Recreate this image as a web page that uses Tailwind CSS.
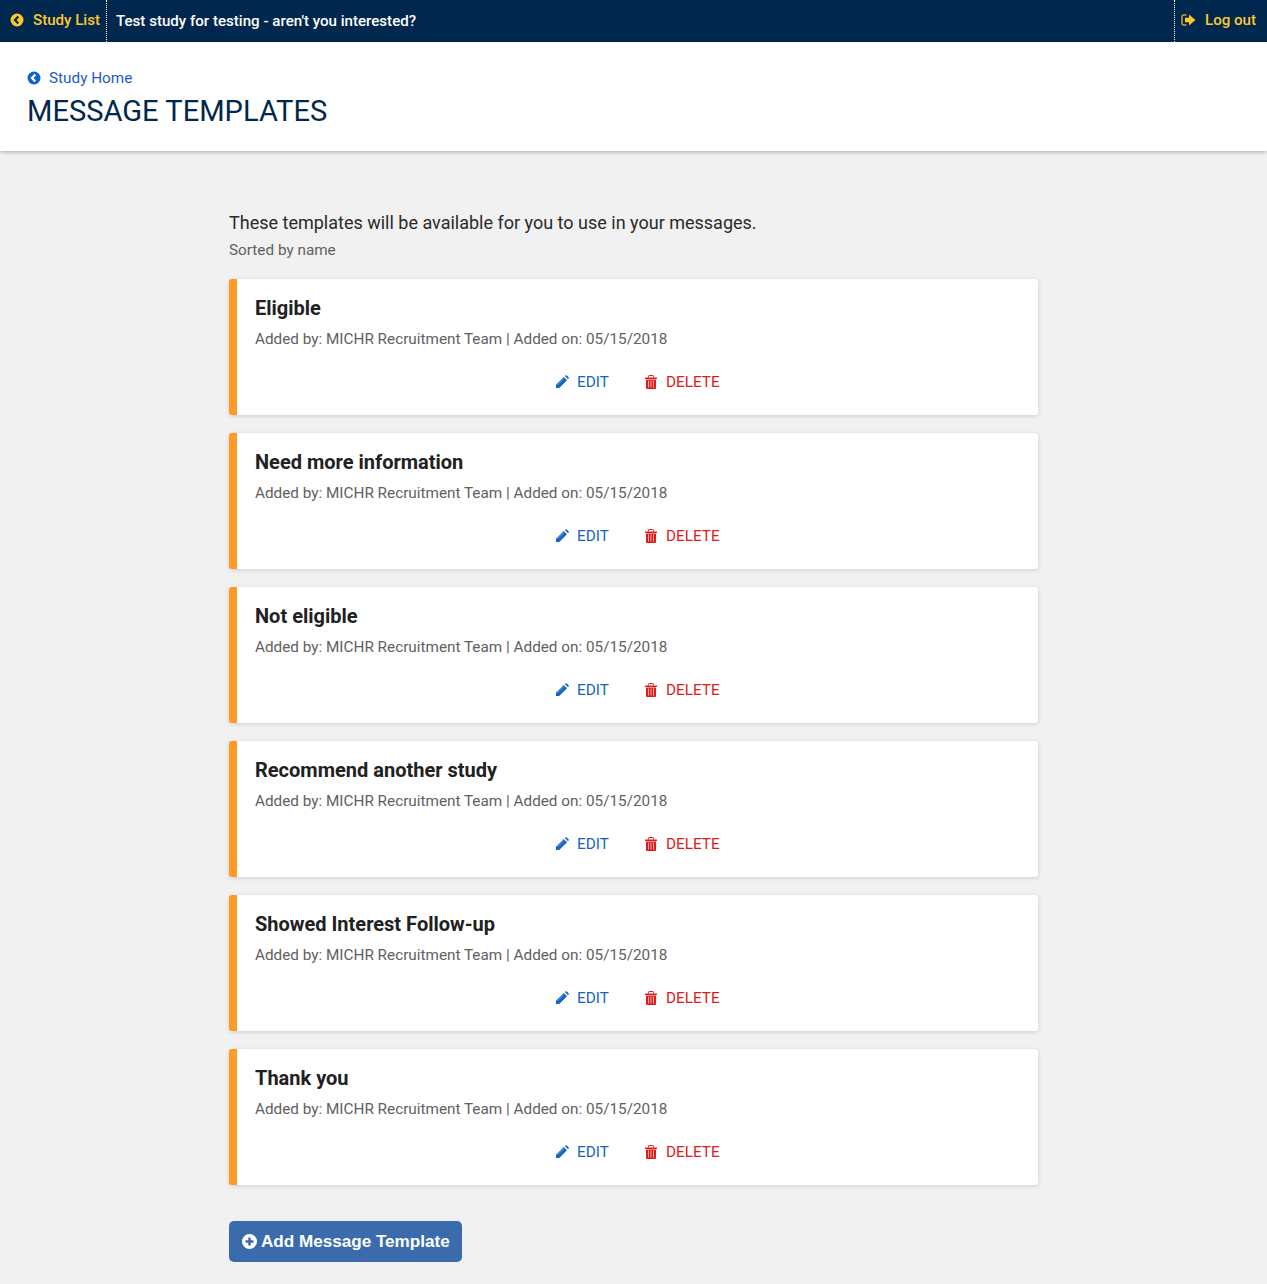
<!DOCTYPE html>
<html><head><meta charset="utf-8"><title>Message Templates</title>
<script src="https://cdn.jsdelivr.net/npm/@tailwindcss/browser@4"></script></head>
<body class="bg-[#f1f1f1] font-['Roboto',sans-serif] min-h-[1284px] overflow-hidden">
<nav class="h-[42px] bg-[#00274d] flex items-center text-[15.1px] font-medium">
  <a class="h-full flex items-center pl-[10px] pr-[6px] pb-[2px] border-r border-dotted border-white text-[#ffc72c] gap-[9px]">
    <svg class="w-[14px] h-[14px]" viewBox="0 0 14 14"><circle cx="7" cy="7" r="6.5" fill="#ffc72c"/><path d="M8.3 3.600 5 7l3.300 3.400" fill="none" stroke="#00274d" stroke-width="2.200"/></svg>
    <span>Study List</span></a>
  <span class="pl-[9px] text-white flex-1">Test study for testing - aren't you interested?</span>
  <a class="h-full flex items-center pl-[6px] pr-[11px] pb-[2px] border-l border-dotted border-white text-[#ffc72c] gap-[9px]">
    <svg class="w-[15px] h-[12px]" viewBox="0 0 15 12"><path d="M5.500 1H2.500A1.500 1.500 0 0 0 1 2.500v7A1.500 1.500 0 0 0 2.500 11h3" fill="none" stroke="#c9a02c" stroke-width="1.600"/><path d="M8 0.500 14.500 6 8 11.500V8.300H4V3.700h4z" fill="#ffc72c"/></svg>
    <span>Log out</span></a>
</nav>
<header class="h-[109px] bg-white shadow-[0_1px_4px_rgba(0,0,0,0.3)] pl-[27px] pt-[26px] relative">
  <a class="flex items-center gap-[8px] text-[#1d5cc9] text-[15.3px] leading-[20px]">
    <svg class="w-[14px] h-[14px]" viewBox="0 0 14 14"><circle cx="7" cy="7" r="6.500" fill="#0f62c9"/><path d="M8.300 3.600 5 7l3.300 3.400" fill="none" stroke="#fff" stroke-width="2.200"/></svg>
    <span>Study Home</span></a>
  <h1 class="text-[#00274d] text-[29.1px] leading-[36px] mt-[5px]">MESSAGE TEMPLATES</h1>
</header>
<main class="w-[809px] ml-[229px] pt-[60px]">
  <p class="text-[18px] leading-[24px] text-[#2a2a2a]">These templates will be available for you to use in your messages.</p>
  <p class="text-[15.3px] leading-[20px] mt-[5px] text-[#616161]">Sorted by name</p>
  <ul class="mt-[19px] flex flex-col gap-[18px]">
    <li class="h-[136px] bg-white border-l-[8px] border-[#ff9a27] rounded-[3px] shadow-[0_1px_4px_rgba(0,0,0,0.15)] pl-[18px] pt-[16px]">
      <h2 class="text-[20px] leading-[26px] font-bold text-[#212121]">Eligible</h2>
      <p class="text-[15.31px] leading-[20px] mt-[8px] text-[#616161]">Added by: MICHR Recruitment Team | Added on: 05/15/2018</p>
      <div class="flex text-[15.3px] leading-[20px] mt-[23px] ml-[300px]">
        <a class="flex items-center gap-[8px] text-[#1565c0] w-[90px]"><svg class="w-[14px] h-[14px]" viewBox="0 0 14 14"><path d="M1 9.800 8.800 2l3.200 3.200L4.200 13H1zM9.800 1l.6-.5a1 1 0 0 1 1.400 0l1.700 1.700a1 1 0 0 1 0 1.400l-.5.600z" fill="#1565c0"/><path d="M2.500 9.800 9 3.300" stroke="#7fb0e6" stroke-width=".8"/></svg><span>EDIT</span></a>
        <a class="flex items-center gap-[9px] text-[#e01b1b]"><svg class="w-[12px] h-[14px]" viewBox="0 0 12 14"><path d="M3.500 2.500V1.200A.7.7 0 0 1 4.200.5h3.600a.7.7 0 0 1 .7.7v1.300" fill="none" stroke="#e01b1b" stroke-width="1"/><path d="M0 2.500h12v1.500H0zM1 4.500h10V13a1 1 0 0 1-1 1H2a1 1 0 0 1-1-1z" fill="#e01b1b"/><path d="M3.500 5.500v7M6 5.500v7M8.500 5.500v7" stroke="#f7b0b0" stroke-width="1"/></svg><span>DELETE</span></a>
      </div>
    </li>
    <li class="h-[136px] bg-white border-l-[8px] border-[#ff9a27] rounded-[3px] shadow-[0_1px_4px_rgba(0,0,0,0.15)] pl-[18px] pt-[16px]">
      <h2 class="text-[20px] leading-[26px] font-bold text-[#212121]">Need more information</h2>
      <p class="text-[15.31px] leading-[20px] mt-[8px] text-[#616161]">Added by: MICHR Recruitment Team | Added on: 05/15/2018</p>
      <div class="flex text-[15.3px] leading-[20px] mt-[23px] ml-[300px]">
        <a class="flex items-center gap-[8px] text-[#1565c0] w-[90px]"><svg class="w-[14px] h-[14px]" viewBox="0 0 14 14"><path d="M1 9.800 8.800 2l3.200 3.200L4.200 13H1zM9.800 1l.6-.5a1 1 0 0 1 1.400 0l1.700 1.700a1 1 0 0 1 0 1.400l-.5.600z" fill="#1565c0"/><path d="M2.500 9.800 9 3.300" stroke="#7fb0e6" stroke-width=".8"/></svg><span>EDIT</span></a>
        <a class="flex items-center gap-[9px] text-[#e01b1b]"><svg class="w-[12px] h-[14px]" viewBox="0 0 12 14"><path d="M3.500 2.500V1.200A.7.7 0 0 1 4.200.5h3.600a.7.7 0 0 1 .7.7v1.300" fill="none" stroke="#e01b1b" stroke-width="1"/><path d="M0 2.500h12v1.500H0zM1 4.500h10V13a1 1 0 0 1-1 1H2a1 1 0 0 1-1-1z" fill="#e01b1b"/><path d="M3.500 5.500v7M6 5.500v7M8.500 5.500v7" stroke="#f7b0b0" stroke-width="1"/></svg><span>DELETE</span></a>
      </div>
    </li>
    <li class="h-[136px] bg-white border-l-[8px] border-[#ff9a27] rounded-[3px] shadow-[0_1px_4px_rgba(0,0,0,0.15)] pl-[18px] pt-[16px]">
      <h2 class="text-[20px] leading-[26px] font-bold text-[#212121]">Not eligible</h2>
      <p class="text-[15.31px] leading-[20px] mt-[8px] text-[#616161]">Added by: MICHR Recruitment Team | Added on: 05/15/2018</p>
      <div class="flex text-[15.3px] leading-[20px] mt-[23px] ml-[300px]">
        <a class="flex items-center gap-[8px] text-[#1565c0] w-[90px]"><svg class="w-[14px] h-[14px]" viewBox="0 0 14 14"><path d="M1 9.800 8.800 2l3.200 3.200L4.200 13H1zM9.800 1l.6-.5a1 1 0 0 1 1.400 0l1.700 1.700a1 1 0 0 1 0 1.400l-.5.600z" fill="#1565c0"/><path d="M2.500 9.800 9 3.300" stroke="#7fb0e6" stroke-width=".8"/></svg><span>EDIT</span></a>
        <a class="flex items-center gap-[9px] text-[#e01b1b]"><svg class="w-[12px] h-[14px]" viewBox="0 0 12 14"><path d="M3.500 2.500V1.200A.7.7 0 0 1 4.200.5h3.600a.7.7 0 0 1 .7.7v1.300" fill="none" stroke="#e01b1b" stroke-width="1"/><path d="M0 2.500h12v1.500H0zM1 4.500h10V13a1 1 0 0 1-1 1H2a1 1 0 0 1-1-1z" fill="#e01b1b"/><path d="M3.500 5.500v7M6 5.500v7M8.500 5.500v7" stroke="#f7b0b0" stroke-width="1"/></svg><span>DELETE</span></a>
      </div>
    </li>
    <li class="h-[136px] bg-white border-l-[8px] border-[#ff9a27] rounded-[3px] shadow-[0_1px_4px_rgba(0,0,0,0.15)] pl-[18px] pt-[16px]">
      <h2 class="text-[20px] leading-[26px] font-bold text-[#212121]">Recommend another study</h2>
      <p class="text-[15.31px] leading-[20px] mt-[8px] text-[#616161]">Added by: MICHR Recruitment Team | Added on: 05/15/2018</p>
      <div class="flex text-[15.3px] leading-[20px] mt-[23px] ml-[300px]">
        <a class="flex items-center gap-[8px] text-[#1565c0] w-[90px]"><svg class="w-[14px] h-[14px]" viewBox="0 0 14 14"><path d="M1 9.800 8.800 2l3.200 3.200L4.200 13H1zM9.800 1l.6-.5a1 1 0 0 1 1.400 0l1.700 1.700a1 1 0 0 1 0 1.400l-.5.600z" fill="#1565c0"/><path d="M2.500 9.800 9 3.300" stroke="#7fb0e6" stroke-width=".8"/></svg><span>EDIT</span></a>
        <a class="flex items-center gap-[9px] text-[#e01b1b]"><svg class="w-[12px] h-[14px]" viewBox="0 0 12 14"><path d="M3.500 2.500V1.200A.7.7 0 0 1 4.200.5h3.600a.7.7 0 0 1 .7.7v1.300" fill="none" stroke="#e01b1b" stroke-width="1"/><path d="M0 2.500h12v1.500H0zM1 4.500h10V13a1 1 0 0 1-1 1H2a1 1 0 0 1-1-1z" fill="#e01b1b"/><path d="M3.500 5.500v7M6 5.500v7M8.500 5.500v7" stroke="#f7b0b0" stroke-width="1"/></svg><span>DELETE</span></a>
      </div>
    </li>
    <li class="h-[136px] bg-white border-l-[8px] border-[#ff9a27] rounded-[3px] shadow-[0_1px_4px_rgba(0,0,0,0.15)] pl-[18px] pt-[16px]">
      <h2 class="text-[20px] leading-[26px] font-bold text-[#212121]">Showed Interest Follow-up</h2>
      <p class="text-[15.31px] leading-[20px] mt-[8px] text-[#616161]">Added by: MICHR Recruitment Team | Added on: 05/15/2018</p>
      <div class="flex text-[15.3px] leading-[20px] mt-[23px] ml-[300px]">
        <a class="flex items-center gap-[8px] text-[#1565c0] w-[90px]"><svg class="w-[14px] h-[14px]" viewBox="0 0 14 14"><path d="M1 9.800 8.800 2l3.200 3.200L4.200 13H1zM9.800 1l.6-.5a1 1 0 0 1 1.400 0l1.700 1.700a1 1 0 0 1 0 1.400l-.5.600z" fill="#1565c0"/><path d="M2.500 9.800 9 3.300" stroke="#7fb0e6" stroke-width=".8"/></svg><span>EDIT</span></a>
        <a class="flex items-center gap-[9px] text-[#e01b1b]"><svg class="w-[12px] h-[14px]" viewBox="0 0 12 14"><path d="M3.500 2.500V1.200A.7.7 0 0 1 4.200.5h3.600a.7.7 0 0 1 .7.7v1.300" fill="none" stroke="#e01b1b" stroke-width="1"/><path d="M0 2.500h12v1.500H0zM1 4.500h10V13a1 1 0 0 1-1 1H2a1 1 0 0 1-1-1z" fill="#e01b1b"/><path d="M3.500 5.500v7M6 5.500v7M8.500 5.500v7" stroke="#f7b0b0" stroke-width="1"/></svg><span>DELETE</span></a>
      </div>
    </li>
    <li class="h-[136px] bg-white border-l-[8px] border-[#ff9a27] rounded-[3px] shadow-[0_1px_4px_rgba(0,0,0,0.15)] pl-[18px] pt-[16px]">
      <h2 class="text-[20px] leading-[26px] font-bold text-[#212121]">Thank you</h2>
      <p class="text-[15.31px] leading-[20px] mt-[8px] text-[#616161]">Added by: MICHR Recruitment Team | Added on: 05/15/2018</p>
      <div class="flex text-[15.3px] leading-[20px] mt-[23px] ml-[300px]">
        <a class="flex items-center gap-[8px] text-[#1565c0] w-[90px]"><svg class="w-[14px] h-[14px]" viewBox="0 0 14 14"><path d="M1 9.800 8.800 2l3.200 3.200L4.200 13H1zM9.800 1l.6-.5a1 1 0 0 1 1.400 0l1.700 1.700a1 1 0 0 1 0 1.400l-.5.600z" fill="#1565c0"/><path d="M2.500 9.800 9 3.300" stroke="#7fb0e6" stroke-width=".8"/></svg><span>EDIT</span></a>
        <a class="flex items-center gap-[9px] text-[#e01b1b]"><svg class="w-[12px] h-[14px]" viewBox="0 0 12 14"><path d="M3.500 2.500V1.200A.7.7 0 0 1 4.200.5h3.600a.7.7 0 0 1 .7.7v1.300" fill="none" stroke="#e01b1b" stroke-width="1"/><path d="M0 2.500h12v1.500H0zM1 4.500h10V13a1 1 0 0 1-1 1H2a1 1 0 0 1-1-1z" fill="#e01b1b"/><path d="M3.500 5.500v7M6 5.500v7M8.500 5.500v7" stroke="#f7b0b0" stroke-width="1"/></svg><span>DELETE</span></a>
      </div>
    </li>
  </ul>
  <button class="mt-[36px] h-[41px] w-[233px] bg-[#3a6cad] rounded-[5px] text-white text-[17.1px] font-bold font-['Liberation_Sans',sans-serif] flex items-center pl-[13px] gap-[4px]">
    <svg class="w-[15px] h-[15px]" viewBox="0 0 15 15"><circle cx="7.500" cy="7.500" r="7.500" fill="#fff"/><path d="M7.500 3.500v8M3.500 7.500h8" stroke="#3a6cad" stroke-width="2.500"/></svg>
    <span class="pt-[1px]">Add Message Template</span></button>
</main>
</body></html>
